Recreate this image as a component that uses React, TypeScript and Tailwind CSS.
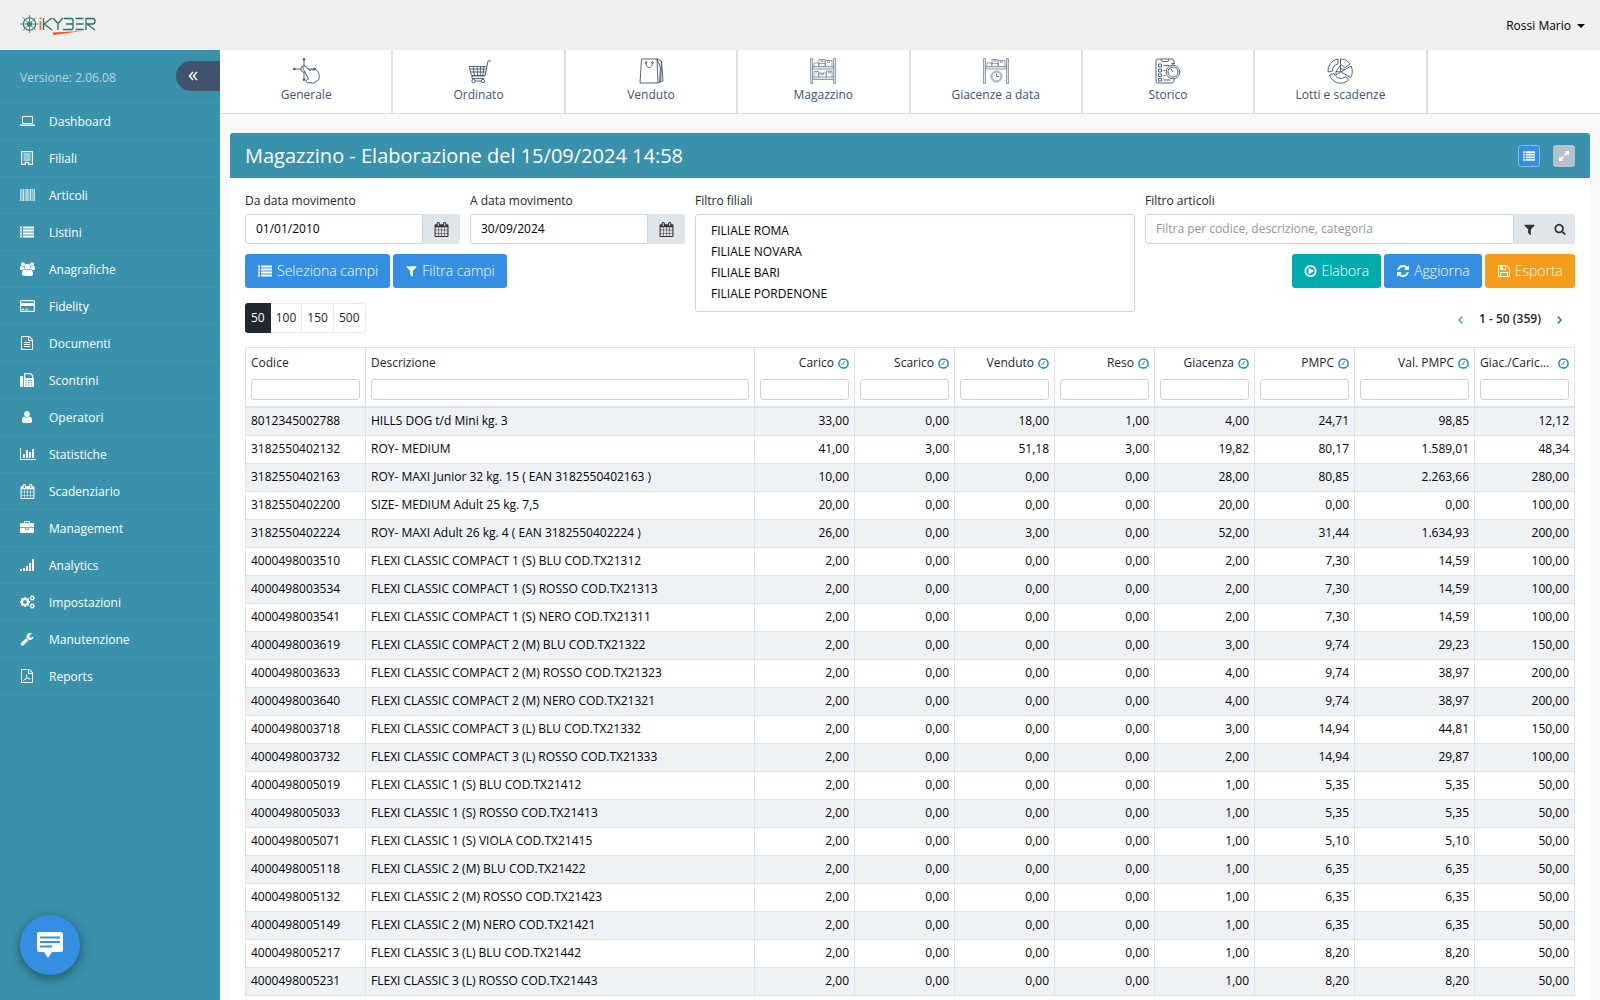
import React from "react";

type IconProps = { className?: string };

function Glyph({ d, box = "0 0 1792 1792", className = "size-4" }: { d: string; box?: string; className?: string }) {
  return (
    <svg viewBox={box} fill="currentColor" className={className} aria-hidden="true">
      <path d={d} />
    </svg>
  );
}

const CALENDAR =
  "M192 1664h288v-288h-288v288zm352 0h320v-288h-320v288zm-352-352h288v-320h-288v320zm352 0h320v-320h-320v320zm-352-384h288v-288h-288v288zm736 736h320v-288h-320v288zm-384-736h320v-288h-320v288zm768 736h288v-288h-288v288zm-384-352h320v-320h-320v320zm-352-864v-288q0-13-9.500-22.500t-22.500-9.500h-64q-13 0-22.500 9.500t-9.500 22.500v288q0 13 9.500 22.500t22.500 9.500h64q13 0 22.500-9.500t9.500-22.500zm736 864h288v-320h-288v320zm-384-384h320v-288h-320v288zm384 0h288v-288h-288v288zm32-480v-288q0-13-9.500-22.500t-22.500-9.500h-64q-13 0-22.500 9.500t-9.500 22.500v288q0 13 9.500 22.500t22.500 9.500h64q13 0 22.500-9.500t9.500-22.500zm384-64v1280q0 52-38 90t-90 38h-1408q-52 0-90-38t-38-90v-1280q0-52 38-90t90-38h128v-96q0-66 47-113t113-47h64q66 0 113 47t47 113v96h384v-96q0-66 47-113t113-47h64q66 0 113 47t47 113v96h128q52 0 90 38t38 90z";
const LAPTOP =
  "M416 1280q-66 0-113-47t-47-113v-704q0-66 47-113t113-47h1088q66 0 113 47t47 113v704q0 66-47 113t-113 47h-1088zm-32-864v704q0 13 9.500 22.500t22.500 9.500h1088q13 0 22.500-9.500t9.500-22.500v-704q0-13-9.500-22.500t-22.500-9.500h-1088q-13 0-22.500 9.500t-9.500 22.500zm1376 928h160v96q0 40-47 68t-113 28h-1600q-66 0-113-28t-47-68v-96h1760zm-720 96q16 0 16-16t-16-16h-160q-16 0-16 16t16 16h160z";
const FILTER =
  "M1595 295q17 41-14 70l-493 493v742q0 42-39 59-13 5-25 5-27 0-45-19l-256-256q-19-19-19-45v-486l-493-493q-31-29-14-70 17-39 59-39h1280q42 0 59 39z";
const SEARCH =
  "M1216 832q0-185-131.500-316.500t-316.500-131.500-316.500 131.500-131.500 316.500 131.500 316.500 316.500 131.500 316.500-131.500 131.500-316.500zm512 832q0 52-38 90t-90 38q-54 0-90-38l-343-342q-179 124-399 124-143 0-273.500-55.500t-225-150-150-225-55.500-273.500 55.500-273.500 150-225 225-150 273.500-55.500 273.500 55.500 225 150 150 225 55.500 273.500q0 220-124 399l343 343q37 37 37 90z";
const REFRESH =
  "M1639 1056q0 5-1 7-64 268-268 434.500t-478 166.500q-146 0-282.500-55t-243.500-157l-129 129q-19 19-45 19t-45-19-19-45v-448q0-26 19-45t45-19h448q26 0 45 19t19 45-19 45l-137 137q71 66 161 102t187 36q134 0 250-65t186-179q11-17 53-117 8-23 30-23h192q13 0 22.500 9.500t9.500 22.500zm25-800v448q0 26-19 45t-45 19h-448q-26 0-45-19t-19-45 19-45l138-138q-148-137-349-137-134 0-250 65t-186 179q-11 17-53 117-8 23-30 23h-199q-13 0-22.500-9.500t-9.500-22.500v-7q65-268 270-434.500t480-166.500q146 0 284 55.500t245 156.500l130-129q19-19 45-19t45 19 19 45z";
const SAVE =
  "M512 1536h768v-384h-768v384zm896 0h128v-896q0-14-10-38.500t-20-34.500l-281-281q-10-10-34-20t-39-10v416q0 40-28 68t-68 28h-576q-40 0-68-28t-28-68v-416h-128v1280h128v-416q0-40 28-68t68-28h832q40 0 68 28t28 68v416zm-384-928v-320q0-13-9.500-22.500t-22.500-9.500h-192q-13 0-22.500 9.500t-9.500 22.500v320q0 13 9.500 22.500t22.500 9.500h192q13 0 22.500-9.500t9.500-22.500zm640 32v928q0 40-28 68t-68 28h-1344q-40 0-68-28t-28-68v-1344q0-40 28-68t68-28h928q40 0 88 20t76 48l280 280q28 28 48 76t20 88z";
const PLAY =
  "M1184 896q0 37-32 55l-544 320q-15 9-32 9-16 0-32-8-32-19-32-56v-640q0-37 32-56 33-18 64 1l544 320q32 18 32 55zm128 0q0-148-73-273t-198-198-273-73-273 73-198 198-73 273 73 273 198 198 273 73 273-73 198-198 73-273zm224 0q0 209-103 385.500t-279.500 279.500-385.500 103-385.500-103-279.500-279.500-103-385.500 103-385.500 279.500-279.500 385.500-103 385.500 103 279.500 279.500 103 385.500z";
const USER =
  "M1536 1399q0 109-62.500 187t-150.500 78h-854q-88 0-150.500-78t-62.500-187q0-85 8.500-160.500t31.500-152 58.500-131 94-89 134.500-34.500q131 128 313 128t313-128q76 0 134.500 34.500t94 89 58.500 131 31.500 152 8.500 160.500zm-256-887q0 159-112.500 271.500t-271.500 112.500-271.500-112.500-112.500-271.500 112.500-271.500 271.500-112.500 271.500 112.500 112.500 271.500z";
const WRENCH =
  "M448 1472q0-26-19-45t-45-19-45 19-19 45 19 45 45 19 45-19 19-45zm644-420l-682 682q-37 37-90 37-52 0-91-37l-106-108q-38-36-38-90 0-53 38-91l681-681q39 98 114.500 173.500t173.500 114.500zm634-435q0 39-23 106-47 134-164.500 217.500t-258.500 83.500q-185 0-316.500-131.500t-131.500-316.500 131.500-316.500 316.500-131.500q58 0 121.500 16.500t107.500 46.500q16 11 16 28t-16 28l-293 169v224l193 107q5-3 79-48.500t135.500-81 70.500-35.500q15 0 23.500 10t8.500 25z";
const BRIEFCASE =
  "M640 256h512v-128h-512v128zm1152 640v480q0 66-47 113t-113 47h-1472q-66 0-113-47t-47-113v-480h672v160q0 26 19 45t45 19h320q26 0 45-19t19-45v-160h672zm-768 0v128h-256v-128h256zm768-480v384h-1792v-384q0-66 47-113t113-47h352v-160q0-40 28-68t68-28h576q40 0 68 28t28 68v160h352q66 0 113 47t47 113z";
const BARS =
  "M640 896v512h-256v-512h256zm384-512v1024h-256v-1024h256zm1024 1152v128h-2048v-1536h128v1408h1920zm-640-896v768h-256v-768h256zm384-384v1152h-256v-1152h256z";
const FILE_FRAME =
  "M1596 380q28 28 48 76t20 88v1152q0 40-28 68t-68 28h-1344q-40 0-68-28t-28-68v-1600q0-40 28-68t68-28h896q40 0 88 20t76 48zm-444-244v376h376q-10-29-22-41l-313-313q-12-12-41-22zm384 1528v-1024h-416q-40 0-68-28t-28-68v-416h-768v1536h1280z";
const FILE_LINES =
  "M512 800q0-14 9-23t23-9h704q14 0 23 9t9 23v64q0 14-9 23t-23 9h-704q-14 0-23-9t-9-23v-64zm736 224q14 0 23 9t9 23v64q0 14-9 23t-23 9h-704q-14 0-23-9t-9-23v-64q0-14 9-23t23-9h704zm0 256q14 0 23 9t9 23v64q0 14-9 23t-23 9h-704q-14 0-23-9t-9-23v-64q0-14 9-23t23-9h704z";

function ListIcon({ className = "size-4" }: IconProps) {
  return (
    <svg viewBox="0 0 14 14" fill="currentColor" className={className} aria-hidden="true">
      <path d="M0 1.500h2v2H0zM3 1.500h11v2H3zM0 4.500h2v2H0zM3 4.500h11v2H3zM0 7.500h2v2H0zM3 7.500h11v2H3zM0 10.500h2v2H0zM3 10.500h11v2H3z" />
    </svg>
  );
}
function BuildingIcon() {
  return (
    <svg viewBox="0 0 14 14" className="size-[14px]" aria-hidden="true">
      <path d="M1.600 .600h10.800v12.800H8.600v-2H5.400v2H1.600z" fill="none" stroke="currentColor" strokeWidth="1.200" />
      <path d="M3.500 3h7M3.500 5h7M3.500 7h7M3.500 9h7" stroke="currentColor" strokeWidth="1" />
    </svg>
  );
}
function BarcodeIcon() {
  return (
    <svg viewBox="0 0 15 12" className="h-3 w-[15px] opacity-80" fill="currentColor" aria-hidden="true">
      <path d="M0 0h.8v12H0zM1.500 0h.5v12h-.5zM2.500 0h1.800v12H2.500zM5 0h.6v12H5zM6.200 0h1.600v12H6.200zM8.400 0h.6v12h-.6zM9.600 0h1.600v12H9.600zM11.800 0h.5v12h-.5zM12.700 0h.8v12h-.8zM14 0h.9v12H14z" />
    </svg>
  );
}
function UsersIcon() {
  return (
    <svg viewBox="0 0 15 14" className="h-[14px] w-[15px]" fill="currentColor" aria-hidden="true">
      <circle cx="3" cy="2.200" r="2" />
      <circle cx="12" cy="2.200" r="2" />
      <circle cx="7.500" cy="4.700" r="2.900" />
      <path d="M4.100 4.600c0 1 .3 1.700.8 2.400-1 0-1.700.4-2.300 1H1.400C.5 8 0 7.500 0 6.500c0-1.300.3-2.500 1.300-2.500 1.300.8 1.900.7 2.800.6zM10.900 4.600c0 1-.3 1.700-.8 2.400 1 0 1.700.4 2.300 1h1.200c.9 0 1.400-.5 1.400-1.500 0-1.300-.3-2.500-1.300-2.500-1.300.8-1.900.7-2.800.6zM4.900 7.500q2.600 2 5.200 0c2.200 0 2.900 2.200 2.900 4.300 0 1.300-.9 2.200-2.200 2.200H4.200C2.900 14 2 13.100 2 11.800c0-2.100.7-4.300 2.900-4.300z" />
    </svg>
  );
}
function CogsIcon() {
  return (
    <svg viewBox="0 0 15 14" className="h-[14px] w-[15px]" fill="none" stroke="currentColor" aria-hidden="true">
      <circle cx="5" cy="7" r="3" strokeWidth="2.200" />
      <path d="M5 2v2M5 10v2M0 7h2M8 7h2M1.500 3.500l1.200 1.200M7.300 9.300l1.200 1.200M1.500 10.500l1.200-1.200M7.300 4.700l1.200-1.200" strokeWidth="1.800" />
      <circle cx="12.200" cy="3" r="1.600" strokeWidth="1.300" />
      <circle cx="12.200" cy="11" r="1.600" strokeWidth="1.300" />
      <path d="M9.700 3h.8M14 3h1M11 .6l.4.7M13.500.6l-.5.7M11 5.400l.4-.7M13.500 5.400l-.5-.7M9.700 11h.8M14 11h1M11 8.600l.4.7M13.500 8.600l-.5.7M11 13.400l.4-.7M13.500 13.400l-.5-.7" strokeWidth="1.200" />
    </svg>
  );
}
function CardIcon() {
  return (
    <svg viewBox="0 0 15 12" className="h-3 w-[15px]" aria-hidden="true">
      <rect x=".6" y=".6" width="13.800" height="10.800" rx="1" fill="none" stroke="currentColor" strokeWidth="1.200" />
      <path d="M0 3h15v3H0zM2 8.800h2v1H2zM5 8.800h3v1H5z" fill="currentColor" />
    </svg>
  );
}
function FaxIcon() {
  return (
    <svg viewBox="0 0 14 14" className="size-[14px]" aria-hidden="true">
      <rect x="0" y="3" width="3.200" height="11" rx="1" fill="currentColor" />
      <path d="M4.800 6V.6h5.700L12.600 2.700V6" fill="none" stroke="currentColor" strokeWidth="1.200" />
      <path fill="currentColor" fillRule="evenodd" d="M4 5h9a1 1 0 0 1 1 1v7a1 1 0 0 1-1 1H4zM5.500 7v1h1.300V7zm2.600 0v1h1.300V7zm2.600 0v1H12V7zM5.500 9.200v1h1.300v-1zm2.600 0v1h1.300v-1zm2.600 0v1H12v-1zM5.500 11.400v1h1.300v-1zm2.600 0v1h1.300v-1zm2.600 0v1H12v-1z" />
    </svg>
  );
}
function SignalIcon() {
  return (
    <svg viewBox="0 0 14 12" className="h-3 w-[14px]" fill="currentColor" aria-hidden="true">
      <path d="M0 10h2v2H0zM3 9h2v3H3zM6 7h2v5H6zM9 4h2v8H9zM12 0h2v12h-2z" />
    </svg>
  );
}
function PdfIcon() {
  return (
    <svg viewBox="0 0 1792 1792" className="size-[14px]" aria-hidden="true">
      <path d={FILE_FRAME} fill="currentColor" />
      <path d="M820 720c-40 130 20 330 160 480 90 90 300 110 330 60 20-50-240-90-460-30-240 60-420 210-400 250 60 70 360-330 430-560 30-110 10-230-60-200z" fill="none" stroke="currentColor" strokeWidth="90" />
    </svg>
  );
}

const line = { fill: "none", stroke: "currentColor", strokeWidth: 0.9 };

function TouchIcon() {
  return (
    <svg viewBox="0 0 28 28" className="size-7" {...line} aria-hidden="true">
      <path d="M12 2v7M2 12h7M15 12h8M12 15v8" />
      <path d="M12 1l1 2h-2zM1 12l2-1v2zM24 12l-2-1v2zM12 24l1-2h-2z" fill="currentColor" />
      <circle cx="12" cy="12" r="3.200" />
      <path d="M11 11.500l5.500 10.500-2 .8q-1.500 1.200.5 2.700l6.500.5 5-3c1.500-3 .8-6-1-9l-2-1.500-2.300.8-1.700-.8-1.500 1.500-4-4.500c-1-1.200-3.500 0-3 2z" fill="#fff" />
    </svg>
  );
}
function CartIcon() {
  return (
    <svg viewBox="0 0 28 28" className="size-7" {...line} aria-hidden="true">
      <path d="M26 4h-3l-3 15H7M21.500 9.500H4l2.500 9h13.500M5 12h16M5.700 15h14.800M8 9.500l1.500 9M12 9.500l.7 9M15.500 9.500l-.2 9M19 9.500l-1.200 9M7 19v2.500h12" />
      <circle cx="8.500" cy="24" r="1.700" />
      <circle cx="18" cy="24" r="1.700" />
      <path d="M10.200 24h6.100" />
    </svg>
  );
}
function BagIcon() {
  return (
    <svg viewBox="0 0 28 28" className="size-7" {...line} aria-hidden="true">
      <path d="M4.500 2h15.500l1 24H3zM20 2l4.500 2 1.500 20-5 2M20 2l3.500 9-1 14.500M24.500 4l-.8 20.500" />
      <path d="M9 6c0 6 6.500 6 6.500 0" />
      <circle cx="9" cy="5.500" r=".9" />
      <circle cx="15.500" cy="5.500" r=".9" />
    </svg>
  );
}
function Shelf({ children }: { children: React.ReactNode }) {
  return (
    <svg viewBox="0 0 28 28" className="size-7 text-[#6d7b92]" fill="none" stroke="currentColor" strokeWidth=".7" aria-hidden="true">
      <path d="M1.500 1.500h2v25h-2zM24.500 1.500h2v25h-2zM3.500 9.500h21v2.500h-21z" fill="#dfe4ec" />
      <path d="M5 9.500V6h4.500v3.500M10 9.500v-7h6v7M16.500 9.500V3.500H23v6M12 2.500v2h2v-2M18.500 3.500v2h2v-2M10 6.500h6" />
      {children}
    </svg>
  );
}
function ShelfIcon() {
  return (
    <Shelf>
      <path d="M3.500 20h21v2.500h-21z" fill="#dfe4ec" />
      <path d="M5 20v-5.500h4.500V20M10 20v-4h7v4M17.500 20v-6H23v6M7 14.500v2M12 16v1.500h2.500V16M19.500 14v2h2v-2" />
    </Shelf>
  );
}
function ShelfClockIcon() {
  return (
    <Shelf>
      <circle cx="14.500" cy="19.500" r="5.500" />
      <circle cx="14.500" cy="19.500" r="4.500" />
      <path d="M14.500 16.500v3H17" strokeWidth="1" />
    </Shelf>
  );
}
function ChecklistIcon() {
  return (
    <svg viewBox="0 0 28 28" className="size-7" {...line} aria-hidden="true">
      <path d="M20 7V4q0-2-2-2H4Q2 2 2 4v20q0 2 2 2h14q2 0 2-2v-2M7 2l1 2.500h6L15 2" />
      <path d="M4.500 7h3v3h-3zM4.500 12h3v3h-3zM4.500 17h3v2.500h-3zM4.500 21.500h3v2.500h-3zM9.500 8.500h6M9.500 13.500h2M9.500 18.500h2M9.500 23h7" />
      <circle cx="19" cy="15" r="6.800" fill="#fff" />
      <circle cx="19" cy="15" r="5" />
      <path d="M19 15l-2.500-3.500M17.500 6.500h3M19 6.500v2" />
    </svg>
  );
}
function ChartIcon() {
  return (
    <svg viewBox="0 0 28 28" className="size-7" {...line} aria-hidden="true">
      <path d="M12 2A12 12 0 0 0 2 15l4.500-1A7 7 0 0 1 12 7zM3.500 18A11.500 11.500 0 0 0 22.500 23l-3-3.500A7 7 0 0 1 8 16.500zM14.500 2v5.500l5 3L24 7A12 12 0 0 0 14.500 2zM25 9l-10 6 9.500 5.500A12 12 0 0 0 25 9z" />
      <path d="M10 14.500L14.500 8v7L10 18zM14.500 15l-4.500-.5M14.500 11.500l4.500 1" />
    </svg>
  );
}

function ClockMark() {
  return (
    <svg viewBox="0 0 12 12" className="size-[11px] shrink-0 text-[#1b8cb0]" fill="none" stroke="currentColor" aria-hidden="true">
      <circle cx="6" cy="6" r="5" strokeWidth="1.600" />
      <path d="M7 3.200L6 6.600H3.800" strokeWidth="1" />
    </svg>
  );
}

function Logo() {
  return (
    <svg viewBox="0 0 78 22" className="h-[22px] w-[78px]" fill="none" role="img" aria-label="iKYBER">
      <g stroke="#2c7366" strokeWidth="1.100">
        <circle cx="9.500" cy="10" r="6.200" />
        <circle cx="9.500" cy="10" r="2" />
        <path d="M9.500 1v18M.5 10h18M3 3.500l13 13M16 3.500L3 16.500" strokeWidth=".8" />
      </g>
      <g stroke="#24705f" strokeWidth="1.300">
        <path d="M23.500 4v12M32 4l-8 6 8 6M33 4l5 5.500L43 4M38 9.500V16M44 4.500h7.500q1.500 0 1.500 1.500v8q0 1.500-1.500 1.500H43M46 10h7M55.500 4.500h8M56 10h7.500M55.500 15.500h8M66 16V4.500h6.500q2.500 0 2.500 2.700T72.500 10H67l8 6" />
      </g>
      <path d="M20.500 7v9M20.500 3.500v2" stroke="#ff6a2b" strokeWidth="1.800" />
      <path d="M33 18.500l29-1.500q-10 1.500-28.500 4z" fill="#f4511e" />
    </svg>
  );
}

const menu: [string, React.ReactNode][] = [
  ["Dashboard", <Glyph d={LAPTOP} box="0 0 1920 1792" className="h-[14px] w-[15px]" />],
  ["Filiali", <BuildingIcon />],
  ["Articoli", <BarcodeIcon />],
  ["Listini", <ListIcon className="size-[14px]" />],
  ["Anagrafiche", <UsersIcon />],
  ["Fidelity", <CardIcon />],
  ["Documenti", <Glyph d={FILE_FRAME + FILE_LINES} className="size-[14px]" />],
  ["Scontrini", <FaxIcon />],
  ["Operatori", <Glyph d={USER} className="size-[14px]" />],
  ["Statistiche", <Glyph d={BARS} box="0 0 2048 1792" className="h-[14px] w-4" />],
  ["Scadenziario", <Glyph d={CALENDAR} className="size-[15px]" />],
  ["Management", <Glyph d={BRIEFCASE} className="size-[14px]" />],
  ["Analytics", <SignalIcon />],
  ["Impostazioni", <CogsIcon />],
  ["Manutenzione", <Glyph d={WRENCH} className="size-[14px]" />],
  ["Reports", <PdfIcon />],
];

const tabs: [string, React.ReactNode][] = [
  ["Generale", <TouchIcon />],
  ["Ordinato", <CartIcon />],
  ["Venduto", <BagIcon />],
  ["Magazzino", <ShelfIcon />],
  ["Giacenze a data", <ShelfClockIcon />],
  ["Storico", <ChecklistIcon />],
  ["Lotti e scadenze", <ChartIcon />],
];

const columns = ["Codice", "Descrizione", "Carico", "Scarico", "Venduto", "Reso", "Giacenza", "PMPC", "Val. PMPC", "Giac./Caric..."];

const rows: string[][] = [
  ["8012345002788", "HILLS DOG t/d Mini kg. 3", "33,00", "0,00", "18,00", "1,00", "4,00", "24,71", "98,85", "12,12"],
  ["3182550402132", "ROY- MEDIUM", "41,00", "3,00", "51,18", "3,00", "19,82", "80,17", "1.589,01", "48,34"],
  ["3182550402163", "ROY- MAXI Junior 32 kg. 15 ( EAN 3182550402163 )", "10,00", "0,00", "0,00", "0,00", "28,00", "80,85", "2.263,66", "280,00"],
  ["3182550402200", "SIZE- MEDIUM Adult 25 kg. 7,5", "20,00", "0,00", "0,00", "0,00", "20,00", "0,00", "0,00", "100,00"],
  ["3182550402224", "ROY- MAXI Adult 26 kg. 4 ( EAN 3182550402224 )", "26,00", "0,00", "3,00", "0,00", "52,00", "31,44", "1.634,93", "200,00"],
  ["4000498003510", "FLEXI CLASSIC COMPACT 1 (S) BLU COD.TX21312", "2,00", "0,00", "0,00", "0,00", "2,00", "7,30", "14,59", "100,00"],
  ["4000498003534", "FLEXI CLASSIC COMPACT 1 (S) ROSSO COD.TX21313", "2,00", "0,00", "0,00", "0,00", "2,00", "7,30", "14,59", "100,00"],
  ["4000498003541", "FLEXI CLASSIC COMPACT 1 (S) NERO COD.TX21311", "2,00", "0,00", "0,00", "0,00", "2,00", "7,30", "14,59", "100,00"],
  ["4000498003619", "FLEXI CLASSIC COMPACT 2 (M) BLU COD.TX21322", "2,00", "0,00", "0,00", "0,00", "3,00", "9,74", "29,23", "150,00"],
  ["4000498003633", "FLEXI CLASSIC COMPACT 2 (M) ROSSO COD.TX21323", "2,00", "0,00", "0,00", "0,00", "4,00", "9,74", "38,97", "200,00"],
  ["4000498003640", "FLEXI CLASSIC COMPACT 2 (M) NERO COD.TX21321", "2,00", "0,00", "0,00", "0,00", "4,00", "9,74", "38,97", "200,00"],
  ["4000498003718", "FLEXI CLASSIC COMPACT 3 (L) BLU COD.TX21332", "2,00", "0,00", "0,00", "0,00", "3,00", "14,94", "44,81", "150,00"],
  ["4000498003732", "FLEXI CLASSIC COMPACT 3 (L) ROSSO COD.TX21333", "2,00", "0,00", "0,00", "0,00", "2,00", "14,94", "29,87", "100,00"],
  ["4000498005019", "FLEXI CLASSIC 1 (S) BLU COD.TX21412", "2,00", "0,00", "0,00", "0,00", "1,00", "5,35", "5,35", "50,00"],
  ["4000498005033", "FLEXI CLASSIC 1 (S) ROSSO COD.TX21413", "2,00", "0,00", "0,00", "0,00", "1,00", "5,35", "5,35", "50,00"],
  ["4000498005071", "FLEXI CLASSIC 1 (S) VIOLA COD.TX21415", "2,00", "0,00", "0,00", "0,00", "1,00", "5,10", "5,10", "50,00"],
  ["4000498005118", "FLEXI CLASSIC 2 (M) BLU COD.TX21422", "2,00", "0,00", "0,00", "0,00", "1,00", "6,35", "6,35", "50,00"],
  ["4000498005132", "FLEXI CLASSIC 2 (M) ROSSO COD.TX21423", "2,00", "0,00", "0,00", "0,00", "1,00", "6,35", "6,35", "50,00"],
  ["4000498005149", "FLEXI CLASSIC 2 (M) NERO COD.TX21421", "2,00", "0,00", "0,00", "0,00", "1,00", "6,35", "6,35", "50,00"],
  ["4000498005217", "FLEXI CLASSIC 3 (L) BLU COD.TX21442", "2,00", "0,00", "0,00", "0,00", "1,00", "8,20", "8,20", "50,00"],
  ["4000498005231", "FLEXI CLASSIC 3 (L) ROSSO COD.TX21443", "2,00", "0,00", "0,00", "0,00", "1,00", "8,20", "8,20", "50,00"],
];

function DateField({ id, label, value }: { id: string; label: string; value: string }) {
  return (
    <div>
      <label htmlFor={id} className="mb-[3px] block leading-5">{label}</label>
      <div className="flex h-[30px]">
        <input id={id} type="text" defaultValue={value} className="min-w-0 flex-1 rounded-l-[3px] border border-[#cfd4da] bg-white px-[10px] text-black outline-none" />
        <button type="button" aria-label={"Apri calendario: " + label} className="flex w-[37px] items-center justify-center rounded-r-[3px] bg-[#e0e5ea] text-[#333]">
          <Glyph d={CALENDAR} className="size-[15px]" />
        </button>
      </div>
    </div>
  );
}

function ActionButton({ tone, icon, children }: { tone: string; icon: React.ReactNode; children: React.ReactNode }) {
  return (
    <button type="button" className={"flex h-[34px] items-center gap-1 rounded-[3px] px-3 text-[14px] font-light whitespace-nowrap text-white " + tone}>
      {icon}
      {children}
    </button>
  );
}

export default function App() {
  return (
    <div className="flex h-screen flex-col overflow-hidden bg-[#f9f9f9] font-['Open_Sans','Noto_Sans',sans-serif] text-xs text-[#212529]">
      <header className="flex h-[50px] shrink-0 items-center justify-between bg-[#efefef] pr-[15px] pl-5">
        <Logo />
        <button type="button" className="flex items-center gap-[6px] pt-px text-black">
          Rossi Mario
          <svg viewBox="0 0 8 4" className="h-1 w-2" fill="currentColor" aria-hidden="true">
            <path d="M0 0h8L4 4z" />
          </svg>
        </button>
      </header>

      <div className="flex min-h-0 flex-1">
        <aside className="relative w-[220px] shrink-0 bg-[#3a91ab] text-white">
          <div className="flex h-[53px] items-center justify-between border-b border-[#4197b0] pl-5">
            <span className="pt-[3px] text-[#b9d3dc]">Versione: 2.06.08</span>
            <button type="button" aria-label="Riduci menu" className="flex h-[30px] w-11 items-center rounded-l-full bg-[#42536e] pl-3">
              <svg viewBox="0 0 10 10" className="size-[10px]" fill="none" stroke="currentColor" strokeWidth="1.500" aria-hidden="true">
                <path d="M5 1L1.500 5 5 9M9 1L5.500 5 9 9" />
              </svg>
            </button>
          </div>
          <nav>
            {menu.map(([name, icon]) => (
              <a key={name} href="#" className="flex h-[37px] items-center gap-[13px] border-b border-[#4197b0] pl-5">
                <span className="flex w-4 items-center">{icon}</span>
                <span className="pt-px">{name}</span>
              </a>
            ))}
          </nav>
          <button type="button" aria-label="Apri chat" className="absolute bottom-[25px] left-5 flex size-[60px] items-center justify-center rounded-full bg-[#348fe2] shadow-[0_3px_12px_rgba(0,0,0,0.45)]">
            <svg viewBox="0 0 26 26" className="size-[26px]" aria-hidden="true">
              <path d="M2.500 0h21A2.500 2.500 0 0 1 26 2.500v15a2.500 2.500 0 0 1-2.500 2.500H15l-4 6-4-6H2.500A2.500 2.500 0 0 1 0 17.500v-15A2.500 2.500 0 0 1 2.500 0z" fill="#fff" />
              <path d="M3 5.500h20M3 10h20M3 14.500h12" stroke="#348fe2" strokeWidth="1.800" />
            </svg>
          </button>
        </aside>

        <main className="flex min-w-0 flex-1 flex-col">
          <nav className="flex h-16 shrink-0 border-b border-[#dcdcdc] bg-white pl-px">
            {tabs.map(([name, icon]) => (
              <a key={name} href="#" className="flex w-1/8 flex-col items-center border-r-2 border-[#dfdfdf] pt-[7px] text-[#42536e]">
                {icon}
                <span className="leading-5">{name}</span>
              </a>
            ))}
          </nav>

          <section className="mx-[10px] mt-[19px] flex-1 rounded-t-[3px] bg-white">
            <div className="flex h-[45px] items-center justify-between rounded-t-[3px] bg-[#3a91ab] px-[15px] text-white">
              <h1 className="text-[20px] leading-6">Magazzino - Elaborazione del 15/09/2024 14:58</h1>
              <div className="flex gap-[13px]">
                <button type="button" aria-label="Vista elenco" className="flex size-[22px] items-center justify-center rounded-[3px] border border-[#86baf0] bg-[#348fe2]">
                  <ListIcon className="size-3" />
                </button>
                <button type="button" aria-label="Espandi pannello" className="flex size-[22px] items-center justify-center rounded-[3px] bg-[#b6c2c9]">
                  <svg viewBox="0 0 12 12" className="size-3" fill="currentColor" aria-hidden="true">
                    <path d="M6.500 1H11v4.500L9.500 4 7.500 6 6 4.500 8 2.500zM5.500 11H1V6.500L2.500 8l2-2L6 7.500l-2 2z" />
                  </svg>
                </button>
              </div>
            </div>

            <div className="px-[15px] pt-[13px]">
              <div className="grid grid-cols-[215fr_215fr_440fr_430fr] gap-x-[10px]">
                <div className="col-span-2">
                  <div className="grid grid-cols-2 gap-x-[10px]">
                    <DateField id="da" label="Da data movimento" value="01/01/2010" />
                    <DateField id="a" label="A data movimento" value="30/09/2024" />
                  </div>
                  <div className="mt-[10px] flex gap-[3px]">
                    <ActionButton tone="bg-[#348fe2]" icon={<ListIcon className="h-[14px] w-4" />}>Seleziona campi</ActionButton>
                    <ActionButton tone="bg-[#348fe2]" icon={<Glyph d={FILTER} className="h-[14px] w-[13px]" />}>Filtra campi</ActionButton>
                  </div>
                  <div className="mt-[15px] flex h-[30px]" role="group" aria-label="Righe per pagina">
                    <button type="button" className="rounded-l-[3px] bg-[#212830] px-[6px] text-white">50</button>
                    <button type="button" className="border-y border-r border-[#e9ecef] px-[5px]">100</button>
                    <button type="button" className="border-y border-r border-[#e9ecef] px-[5px]">150</button>
                    <button type="button" className="rounded-r-[3px] border-y border-r border-[#e9ecef] px-[5px]">500</button>
                  </div>
                </div>
                <div>
                  <label htmlFor="filiali" className="mb-[3px] block leading-5">Filtro filiali</label>
                  <select id="filiali" multiple size={4} className="block h-[98px] w-full overflow-hidden rounded-[3px] border border-[#cfd4da] bg-white px-[15px] py-[7px] text-black outline-none">
                    <option className="h-[21px] leading-5">FILIALE ROMA</option>
                    <option className="h-[21px] leading-5">FILIALE NOVARA</option>
                    <option className="h-[21px] leading-5">FILIALE BARI</option>
                    <option className="h-[21px] leading-5">FILIALE PORDENONE</option>
                  </select>
                </div>
                <div>
                  <label htmlFor="articoli" className="mb-[3px] block leading-5">Filtro articoli</label>
                  <div className="flex h-[30px]">
                    <input id="articoli" type="text" placeholder="Filtra per codice, descrizione, categoria" className="min-w-0 flex-1 rounded-l-[3px] border border-[#cfd4da] bg-white px-[10px] outline-none placeholder:text-[#8f969c]" />
                    <button type="button" aria-label="Filtra" className="flex w-[30px] items-center justify-center bg-[#e0e5ea] text-[#333]">
                      <Glyph d={FILTER} className="size-[13px]" />
                    </button>
                    <button type="button" aria-label="Cerca" className="flex w-[31px] items-center justify-center rounded-r-[3px] bg-[#e0e5ea] text-[#333]">
                      <Glyph d={SEARCH} className="size-3" />
                    </button>
                  </div>
                  <div className="mt-[10px] flex justify-end gap-[3px]">
                    <ActionButton tone="bg-[#00acac]" icon={<Glyph d={PLAY} box="0 0 1536 1792" className="h-[14px] w-[13px]" />}>Elabora</ActionButton>
                    <ActionButton tone="bg-[#348fe2]" icon={<Glyph d={REFRESH} className="size-[14px]" />}>Aggiorna</ActionButton>
                    <ActionButton tone="bg-[#f59c1a]" icon={<Glyph d={SAVE} className="size-[14px]" />}>Esporta</ActionButton>
                  </div>
                  <div className="mt-[21px] flex items-center justify-end gap-4 pr-[13px]">
                    <button type="button" aria-label="Pagina precedente" className="pt-[2px] text-[#348fe2]">
                      <svg viewBox="0 0 5 8" className="h-2 w-[5px]" fill="none" stroke="currentColor" strokeWidth="1.200" aria-hidden="true"><path d="M4.200 .5L1 4l3.200 3.500" /></svg>
                    </button>
                    <span className="leading-5 font-semibold">1 - 50 (359)</span>
                    <button type="button" aria-label="Pagina successiva" className="pt-[2px] text-[#1b6fc4]">
                      <svg viewBox="0 0 5 8" className="h-2 w-[5px]" fill="none" stroke="currentColor" strokeWidth="1.400" aria-hidden="true"><path d="M.8 .5L4 4 .8 7.500" /></svg>
                    </button>
                  </div>
                </div>
              </div>

              <table className="mt-[14px] w-full table-fixed border-collapse border border-[#dfe3e7]">
                <colgroup>
                  <col className="w-[120px]" />
                  <col />
                  <col className="w-[100px]" />
                  <col className="w-[100px]" />
                  <col className="w-[100px]" />
                  <col className="w-[100px]" />
                  <col className="w-[100px]" />
                  <col className="w-[100px]" />
                  <col className="w-[120px]" />
                  <col className="w-[100px]" />
                </colgroup>
                <thead>
                  <tr className="border-b-2 border-[#dde1e5]">
                    {columns.map((name, i) => (
                      <th key={name} scope="col" className="border-r border-[#dfe3e7] px-[5px] pt-1 pb-[6px] font-normal">
                        <span className={i < 2 ? "flex h-[22px] items-center" : i === 9 ? "flex h-[22px] items-center justify-between" : "flex h-[22px] items-center justify-end gap-1"}>
                          {name}
                          {i > 1 && <ClockMark />}
                        </span>
                        <input type="text" aria-label={"Filtra " + name} className="mt-[5px] block h-[21px] w-full rounded-[3px] border border-[#ced3d9] bg-white px-1 outline-none" />
                      </th>
                    ))}
                  </tr>
                </thead>
                <tbody className="text-black">
                  {rows.map((row) => (
                    <tr key={row[0]} className="h-7 border-b border-[#dfe3e7] odd:bg-[#eff2f5]">
                      {row.map((cell, i) => (
                        <td key={i} className={i < 2 ? "truncate border-r border-[#dfe3e7] px-[5px] leading-5" : "border-r border-[#dfe3e7] px-[5px] text-right leading-5"}>
                          {cell}
                        </td>
                      ))}
                    </tr>
                  ))}
                </tbody>
              </table>
            </div>
          </section>
        </main>
      </div>
    </div>
  );
}
